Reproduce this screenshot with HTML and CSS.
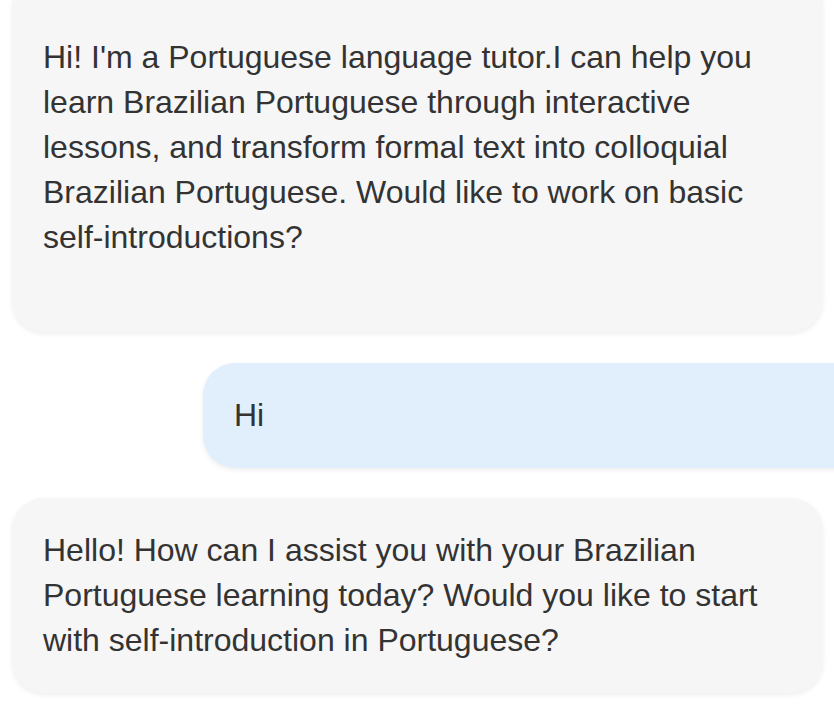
FILE: index.html
```html
<!DOCTYPE html>
<html lang="en">
<head>
<meta charset="utf-8">
<link rel="stylesheet" href="styles.css">
</head>
<body>
<div class="chat">
  <div class="bubble bot first">Hi! I'm a Portuguese language tutor.I can help you learn Brazilian Portuguese through interactive lessons, and transform formal text into colloquial Brazilian Portuguese. Would like to work on basic self-introductions?</div>
  <div class="bubble user">Hi</div>
  <div class="bubble bot">Hello! How can I assist you with your Brazilian Portuguese learning today? Would you like to start with self-introduction in Portuguese?</div>
</div>
</body>
</html>
```
FILE: styles.css
```css
html, body {
  margin: 0;
  padding: 0;
  background: #ffffff;
  overflow: hidden;
}
body {
  font-family: "Liberation Sans", Arial, sans-serif;
  color: #333333;
  width: 834px;
  height: 708px;
}
.chat {
  display: flex;
  flex-direction: column;
  gap: 30px;
  padding: 0 11px 0 12px;
}
.bubble {
  font-size: 32px;
  line-height: 45px;
  padding: 30px 30px 30px 31px;
  border-radius: 32px;
  box-shadow: 0 2px 5px rgba(0, 0, 0, 0.07);
}
.bot {
  background: #f6f6f6;
}
.first {
  border-radius: 0 0 32px 32px;
  padding-top: 35px;
  padding-bottom: 72px;
  margin-bottom: 1px;
}
.user {
  background: #e1effd;
  margin-left: 191px;
  margin-right: -60px;
}
```
